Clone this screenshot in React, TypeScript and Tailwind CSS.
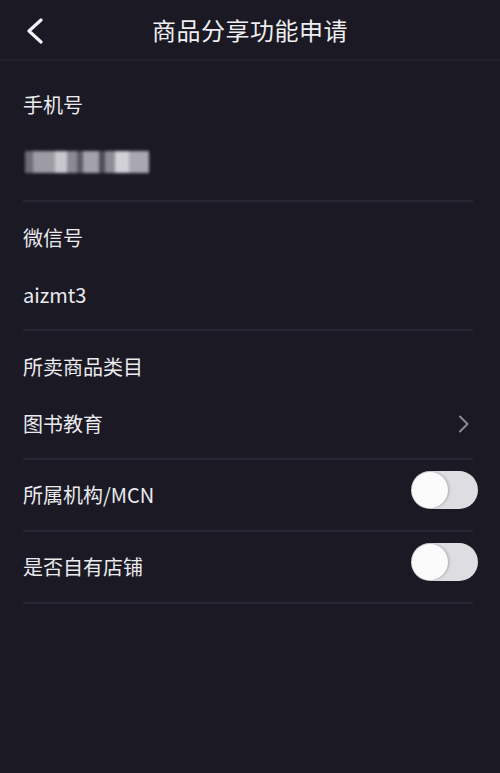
import React from "react";

const font = { fontFamily: '"Noto Sans CJK SC", "Noto Sans", sans-serif' };

const Toggle = () => (
  <div className="mb-[10px] w-[67px] h-[38px] rounded-full bg-[#dedde2] p-[1px] flex items-center">
    <div className="w-[36px] h-[36px] rounded-full bg-[#fbfbfb] shadow-[1px_0_3px_rgba(0,0,0,0.25)]" />
  </div>
);

const BlurredPhone = () => (
  <div className="flex items-center h-[28px] blur-[1.5px]">
    <div className="w-[8px] h-[22px] bg-[#6d6c75]" />
    <div className="w-[22px] h-[22px] bg-[#9d9ca4]" />
    <div className="w-[12px] h-[22px] bg-[#c9c8cf]" />
    <div className="w-[10px] h-[22px] bg-[#8b8a92]" />
    <div className="w-[6px] h-[22px] bg-[#5b5a63]" />
    <div className="w-[16px] h-[22px] bg-[#a3a2aa]" />
    <div className="w-[6px] h-[22px] bg-[#4e4d57]" />
    <div className="w-[10px] h-[22px] bg-[#8e8d95]" />
    <div className="w-[14px] h-[22px] bg-[#d2d1d7]" />
    <div className="w-[20px] h-[22px] bg-[#a9a8b0]" />
  </div>
);

const Divider = () => <div className="ml-[23px] mr-[27px] h-[2px] bg-[#272632]" />;

export default function App() {
  return (
    <div className="w-[500px] h-[773px] bg-[#1a1924] text-[#ebebef]" style={font}>
      <header className="relative h-[61px] flex items-center justify-center border-b-2 border-[#22212c]">
        <svg
          className="absolute left-[24px] top-[18px]"
          width="22"
          height="26"
          viewBox="0 0 22 26"
          fill="none"
          stroke="#f2f2f4"
          strokeWidth="3.2"
          strokeLinecap="round"
          strokeLinejoin="round"
        >
          <path d="M17 2 L5 13 L17 24" />
        </svg>
        <h1 className="text-[24px] leading-none tracking-[0.5px] text-[#efeff2]">商品分享功能申请</h1>
      </header>

      <section className="px-[23px] pt-[30px] pb-[24px] flex flex-col gap-[29px]">
        <div className="h-[28px] flex items-center text-[20px]">手机号</div>
        <div className="pl-[2px]">
          <BlurredPhone />
        </div>
      </section>
      <Divider />

      <section className="px-[23px] pt-[22px] pb-[20px] flex flex-col gap-[29px]">
        <div className="h-[28px] flex items-center text-[20px]">微信号</div>
        <div className="h-[28px] flex items-center text-[20px]">aizmt3</div>
      </section>
      <Divider />

      <section className="pl-[23px] pr-[30px] pt-[22px] pb-[20px] flex flex-col gap-[29px]">
        <div className="h-[28px] flex items-center text-[20px]">所卖商品类目</div>
        <div className="h-[28px] flex items-center justify-between text-[20px]">
          <span>图书教育</span>
          <svg
            width="12"
            height="18"
            viewBox="0 0 12 18"
            fill="none"
            stroke="#8c8b94"
            strokeWidth="2"
            strokeLinecap="round"
            strokeLinejoin="round"
          >
            <path d="M2 1.5 L9.5 9 L2 16.5" />
          </svg>
        </div>
      </section>
      <Divider />

      <div className="h-[70px] pl-[23px] pr-[22px] flex items-center justify-between">
        <span className="text-[20px]">所属机构/MCN</span>
        <Toggle />
      </div>
      <Divider />

      <div className="h-[70px] pl-[23px] pr-[22px] flex items-center justify-between">
        <span className="text-[20px]">是否自有店铺</span>
        <Toggle />
      </div>
      <Divider />
    </div>
  );
}
